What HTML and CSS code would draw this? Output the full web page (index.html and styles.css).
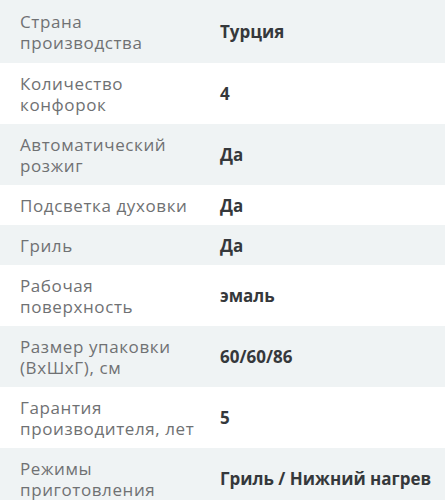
FILE: index.html
```html
<!DOCTYPE html>
<html lang="ru">
<head>
<meta charset="utf-8">
<link rel="stylesheet" href="styles.css">
</head>
<body>
<div class="specs">
  <div class="row"><div class="label">Страна<br>производства</div><div class="value">Турция</div></div>
  <div class="row"><div class="label">Количество<br>конфорок</div><div class="value">4</div></div>
  <div class="row"><div class="label">Автоматический<br>розжиг</div><div class="value">Да</div></div>
  <div class="row"><div class="label">Подсветка духовки</div><div class="value">Да</div></div>
  <div class="row"><div class="label">Гриль</div><div class="value">Да</div></div>
  <div class="row"><div class="label">Рабочая<br>поверхность</div><div class="value">эмаль</div></div>
  <div class="row"><div class="label">Размер упаковки<br>(ВхШхГ), см</div><div class="value">60/60/86</div></div>
  <div class="row"><div class="label">Гарантия<br>производителя, лет</div><div class="value">5</div></div>
  <div class="row"><div class="label">Режимы<br>приготовления</div><div class="value">Гриль / Нижний нагрев</div></div>
</div>
</body>
</html>
```
FILE: styles.css
```css
html, body {
  margin: 0;
  padding: 0;
  background: #ffffff;
}
.specs {
  font-family: "Open Sans", "Noto Sans", sans-serif;
  font-size: 17px;
  line-height: 21px;
}
.row {
  display: grid;
  grid-template-columns: 180px 1fr;
  column-gap: 20px;
  align-items: center;
  padding: 9.5px 20px;
}
.row:first-child {
  padding-top: 10.5px;
  padding-bottom: 10.5px;
}
.row:nth-child(odd) {
  background: #eff3f4;
}
.label {
  color: #6f7173;
  letter-spacing: 0.6px;
}
.value {
  color: #35383b;
  font-weight: 700;
  white-space: nowrap;
}
```
